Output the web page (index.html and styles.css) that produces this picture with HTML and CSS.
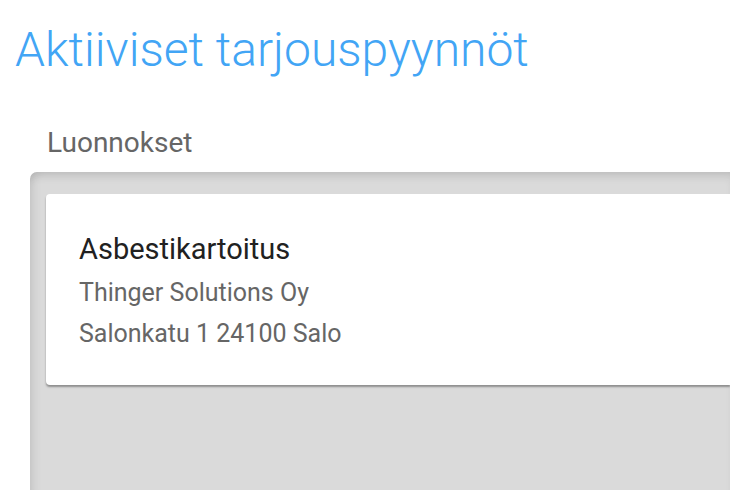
FILE: index.html
```html
<!DOCTYPE html>
<html lang="fi">
<head>
    <meta charset="UTF-8">
    <meta name="viewport" content="width=device-width, initial-scale=1.0">
    <title>Aktiiviset tarjouspyynnöt</title>
    <link rel="stylesheet" href="styles.css">
</head>
<body>

    <h1 class="page-title">Aktiiviset tarjouspyynnöt</h1>

    <!-- Luonnokset -->
    <div class="section">
        <div class="section-label">Luonnokset</div>
        <div class="drop-area">
            <div class="request-card">
                <div class="request-title">Asbestikartoitus</div>
                <div class="request-line">Thinger Solutions Oy</div>
                <div class="request-line">Salonkatu 1 24100 Salo</div>
            </div>
        </div>
    </div>

</body>
</html>
```

FILE: styles.css
```css
body {
    font-family: 'Roboto', 'Liberation Sans', sans-serif;
    background-color: #ffffff;
    margin: 0;
    padding: 0;
    overflow: hidden;
}

.page-title {
    margin: 22px 0 0 15px;
    font-size: 48px;
    line-height: 56px;
    font-weight: 300;
    color: #42a5f5;
}

.section {
    margin-top: 48px;
    padding-left: 30px;
}

.section-label {
    margin: 0 0 13px 17px;
    font-size: 28px;
    line-height: 33px;
    color: #666666;
}

.drop-area {
    background-color: #dadada;
    border-top-left-radius: 7px;
    padding: 22px 0 110px 16px;
    box-shadow: inset 0 8px 8px -4px rgba(0, 0, 0, 0.12),
                inset 8px 0 8px -4px rgba(0, 0, 0, 0.08);
}

.request-card {
    background-color: #ffffff;
    border-radius: 4px 0 0 4px;
    height: 191px;
    box-sizing: border-box;
    padding: 35px 0 0 33px;
    box-shadow: 0 2px 2px rgba(0, 0, 0, 0.35);
}

.request-title {
    font-size: 29px;
    line-height: 40px;
    color: #212121;
    margin-bottom: 3px;
}

.request-line {
    font-size: 25px;
    line-height: 41px;
    color: #666666;
}
```
